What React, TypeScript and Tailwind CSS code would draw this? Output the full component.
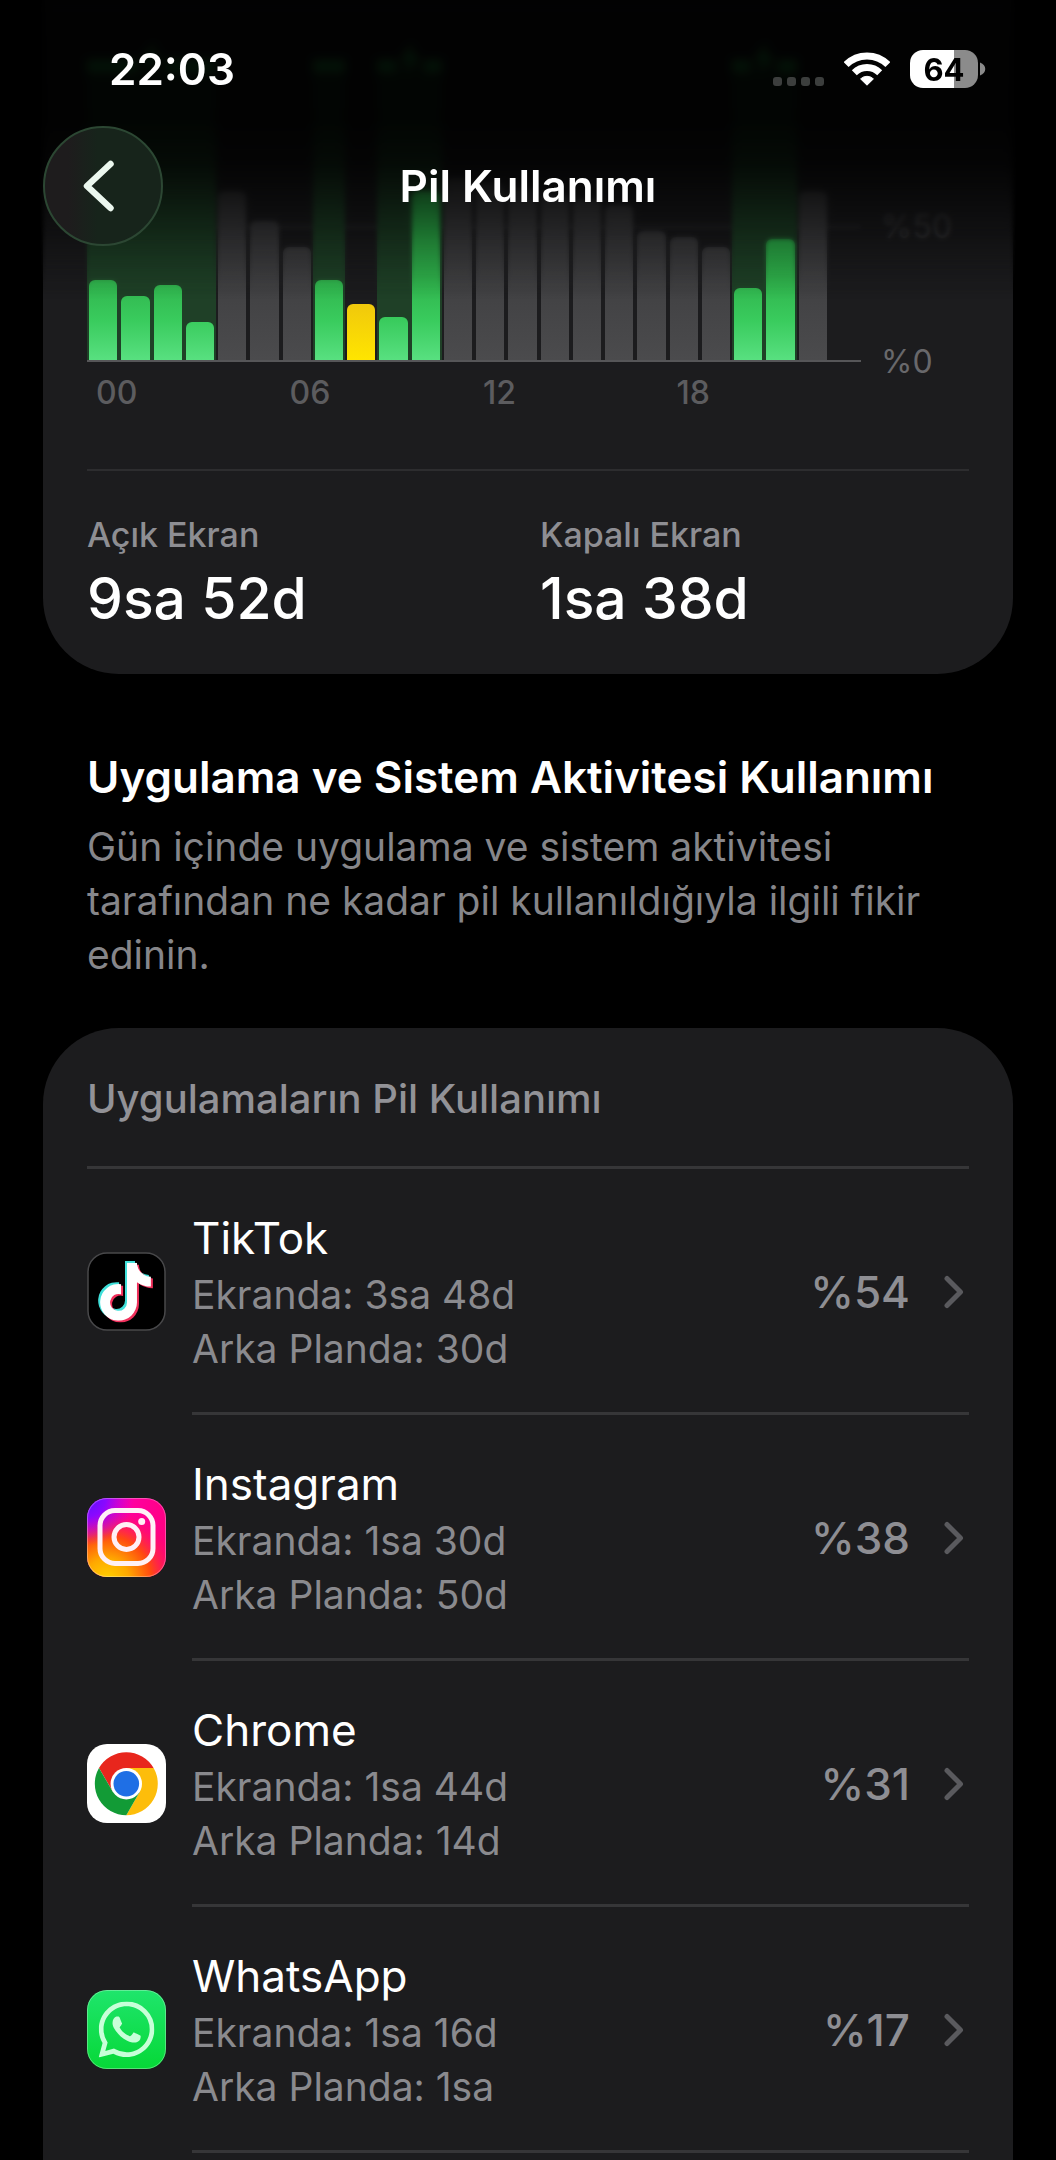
import React from 'react';
import { FaTiktok } from 'react-icons/fa6';
import { SiWhatsapp } from 'react-icons/si';

type BarKind = 'charge' | 'low' | 'idle';

interface HourBar {
  level: number;
  kind: BarKind;
}

interface AppUsage {
  name: string;
  onScreen: string;
  background: string;
  percent: number;
  icon: React.ReactNode;
}

const bars: HourBar[] = [
  { level: 30, kind: 'charge' },
  { level: 24, kind: 'charge' },
  { level: 28, kind: 'charge' },
  { level: 14, kind: 'charge' },
  { level: 63, kind: 'idle' },
  { level: 52, kind: 'idle' },
  { level: 42, kind: 'idle' },
  { level: 30, kind: 'charge' },
  { level: 21, kind: 'low' },
  { level: 16, kind: 'charge' },
  { level: 63, kind: 'charge' },
  { level: 68, kind: 'idle' },
  { level: 66, kind: 'idle' },
  { level: 64, kind: 'idle' },
  { level: 62, kind: 'idle' },
  { level: 60, kind: 'idle' },
  { level: 58, kind: 'idle' },
  { level: 48, kind: 'idle' },
  { level: 46, kind: 'idle' },
  { level: 42, kind: 'idle' },
  { level: 27, kind: 'charge' },
  { level: 45, kind: 'charge' },
  { level: 63, kind: 'idle' },
  { level: 0, kind: 'idle' },
];

// first hour and length of each charging period
const chargePeriods = [
  { start: 0, hours: 4 },
  { start: 7, hours: 1 },
  { start: 9, hours: 2 },
  { start: 20, hours: 2 },
];

const barColors: Record<BarKind, string> = {
  charge: 'bg-[linear-gradient(to_top,#58e080,#39cb5d_40px,#30b24c_82px,#2db34b)]',
  low: 'bg-[linear-gradient(to_top,#ffe500,#f0c80c_57px)]',
  idle: 'bg-[linear-gradient(to_top,#4b4b4d,#404042_82px,#3c3c3e)]',
};

const TikTokIcon = () => (
  <svg viewBox="0 0 79 79" className="size-full">
    <rect x="1" y="1" width="77" height="77" rx="19" fill="#000" stroke="#48484a" strokeWidth="1.5" />
    <FaTiktok x="7.5" y="9" size={58} color="#3fe0da" />
    <FaTiktok x="11.5" y="12.5" size={58} color="#f0305c" />
    <FaTiktok x="9.5" y="10.8" size={58} color="#fff" />
  </svg>
);

const InstagramIcon = () => (
  <svg viewBox="0 0 79 79" className="size-full">
    <defs>
      <linearGradient id="ig-base" x1="0" y1="0.3" x2="1" y2="0.5">
        <stop offset="0" stopColor="#d800d8" />
        <stop offset="0.5" stopColor="#ff00a0" />
        <stop offset="1" stopColor="#ff0080" />
      </linearGradient>
      <radialGradient id="ig-warm" cx="0.25" cy="1.05" r="0.95">
        <stop offset="0" stopColor="#ffd400" />
        <stop offset="0.3" stopColor="#ffa800" />
        <stop offset="0.6" stopColor="#ff4a10" />
        <stop offset="1" stopColor="#ff0070" stopOpacity="0" />
      </radialGradient>
      <radialGradient id="ig-violet" cx="0" cy="0" r="0.6">
        <stop offset="0" stopColor="#5a10ff" />
        <stop offset="0.4" stopColor="#8a08ff" />
        <stop offset="1" stopColor="#d800d8" stopOpacity="0" />
      </radialGradient>
    </defs>
    <rect width="79" height="79" rx="20" fill="url(#ig-base)" />
    <rect width="79" height="79" rx="20" fill="url(#ig-warm)" />
    <rect width="79" height="79" rx="20" fill="url(#ig-violet)" />
    <rect x="0.5" y="0.5" width="78" height="78" rx="19.5" fill="none" stroke="#fff" strokeOpacity="0.3" />
    <g fill="none" stroke="#fff0f6" strokeWidth="5">
      <rect x="13" y="12.5" width="53" height="53" rx="15" />
      <circle cx="39.5" cy="39" r="12.5" />
    </g>
    <circle cx="54.7" cy="23.6" r="3.5" fill="#fff0f6" />
  </svg>
);

const ChromeIcon = () => (
  <svg viewBox="0 0 79 79" className="size-full">
    <rect width="79" height="79" rx="20" fill="#fff" />
    <g transform="translate(39.3 39.7)">
      <path d="M-27.3 -15.7A31.5 31.5 0 0 1 27.3 -15.7L0 -15.7L-13.6 7.85Z" fill="#e8261d" />
      <path d="M27.3 -15.7A31.5 31.5 0 0 1 0 31.5L13.6 7.85L0 -15.7Z" fill="#fdbd0b" />
      <path d="M0 31.5A31.5 31.5 0 0 1 -27.3 -15.7L-13.6 7.85L13.6 7.85Z" fill="#129b36" />
      <circle r="15.7" fill="#fff" />
      <circle r="12.8" fill="#1f6fe5" />
    </g>
  </svg>
);

const WhatsAppIcon = () => (
  <svg viewBox="0 0 79 79" className="size-full">
    <defs>
      <linearGradient id="wa-base" x1="0" y1="0" x2="0" y2="1">
        <stop offset="0" stopColor="#1fe56c" />
        <stop offset="1" stopColor="#06d837" />
      </linearGradient>
    </defs>
    <rect width="79" height="79" rx="20" fill="url(#wa-base)" />
    <rect x="0.5" y="0.5" width="78" height="78" rx="19.5" fill="none" stroke="#fff" strokeOpacity="0.3" />
    <SiWhatsapp x="11.5" y="11.5" size={56} color="#c8ffd9" />
  </svg>
);

const apps: AppUsage[] = [
  { name: 'TikTok', onScreen: '3sa 48d', background: '30d', percent: 54, icon: <TikTokIcon /> },
  { name: 'Instagram', onScreen: '1sa 30d', background: '50d', percent: 38, icon: <InstagramIcon /> },
  { name: 'Chrome', onScreen: '1sa 44d', background: '14d', percent: 31, icon: <ChromeIcon /> },
  { name: 'WhatsApp', onScreen: '1sa 16d', background: '1sa', percent: 17, icon: <WhatsAppIcon /> },
];

const StatusBar = () => (
  <div className="flex h-[62px] items-center justify-between pr-[70px] pl-[109px]">
    <span className="text-[44px] leading-none font-semibold">22:03</span>
    <div className="flex items-center">
      <div className="mt-6 mr-5 flex gap-[5px]">
        {[0, 1, 2, 3].map((dot) => (
          <span key={dot} className="size-[9px] rounded-[3px] bg-[#3c3e3d]" />
        ))}
      </div>
      <svg viewBox="0 0 46 34" className="mr-5 h-[34px] w-[46px]" fill="none" stroke="#fff" strokeWidth="7">
        <path d="M2.1 12.6A29.5 29.5 0 0 1 43.9 12.6" />
        <path d="M10.3 20.8A18 18 0 0 1 35.7 20.8" />
        <path d="M23 33.2L16.6 26.9A9.2 9.2 0 0 1 29.4 26.9Z" fill="#fff" stroke="#fff" strokeWidth="1" strokeLinejoin="round" />
      </svg>
      <div className="flex h-[38px] w-[68px] items-center justify-center rounded-[13px] bg-[linear-gradient(to_right,#fff_64%,#8b8b8b_64%)]">
        <span className="text-[31px] leading-none font-bold text-black">64</span>
      </div>
      <svg viewBox="0 0 6 14" className="ml-[2px] h-[14px] w-[6px]" fill="#8b8b8b">
        <path d="M0 0.5C7 3 7 11 0 13.5Z" />
      </svg>
    </div>
  </div>
);

const Header = () => (
  <header className="absolute inset-x-0 top-0 z-10 h-[300px] pt-[38px]">
    <div className="absolute inset-0 -z-10 backdrop-blur-[2px] [mask-image:linear-gradient(to_bottom,#000_75%,transparent_98%)]" />
    <div className="absolute inset-0 -z-10 backdrop-blur-[4px] [mask-image:linear-gradient(to_bottom,#000_45%,transparent_80%)]" />
    <div className="absolute inset-0 -z-10 bg-[linear-gradient(to_bottom,rgba(0,0,0,0.9),rgba(0,0,0,0.92)_120px,rgba(0,0,0,0.82)_165px,rgba(0,0,0,0.6)_200px,rgba(0,0,0,0.32)_240px,rgba(0,0,0,0.08)_280px,transparent)]" />
    <StatusBar />
    <nav className="mt-[26px] grid grid-cols-[1fr_auto_1fr] items-center px-[43px]">
      <button
        type="button"
        aria-label="Geri"
        className="flex size-[120px] items-center justify-center rounded-full border-2 border-[#2c4733] bg-[linear-gradient(to_right,#1e1c1d_20%,#17241b_45%)]"
      >
        <svg viewBox="0 0 32 52" className="mr-2 h-[52px] w-[32px]" fill="none" stroke="#ebf7ee" strokeWidth="6.5" strokeLinecap="round" strokeLinejoin="round">
          <path d="M27.5 4L4 26L27.5 48" />
        </svg>
      </button>
      <h1 className="text-[44px] leading-[48px] font-semibold">Pil Kullanımı</h1>
    </nav>
  </header>
);

const BatteryChart = () => (
  <div className="flex">
    <div className="min-w-0 flex-1">
      <div className="relative h-[270px] border-b-2 border-[#565658]">
        <div className="absolute inset-x-0 top-1/2 h-[2px] bg-[#2e2e30]" />
        <div className="absolute inset-x-0 -top-8 bottom-0 grid grid-cols-24">
          {chargePeriods.map((period) => (
            <div
              key={period.start}
              className="bg-[#1f4027]"
              style={{ gridColumn: `${period.start + 1} / span ${period.hours}` }}
            >
              <div className="flex h-[12px] items-center justify-center gap-1">
                <span className="h-[12px] flex-1 bg-[#30d158]" />
                {period.hours > 1 && (
                  <svg viewBox="0 0 20 32" className="mb-4 h-[32px] w-[20px]" fill="#30d158">
                    <path d="M13 0L0 18H8L6 32L20 13H11Z" />
                  </svg>
                )}
                {period.hours > 1 && <span className="h-[12px] flex-1 bg-[#30d158]" />}
              </div>
            </div>
          ))}
        </div>
        <div className="relative flex h-full items-end">
          {bars.map((bar, hour) => (
            <div key={hour} className="flex h-full flex-1 items-end px-[2px]">
              <div className={`w-full rounded-t-[6px] ${barColors[bar.kind]}`} style={{ height: `${bar.level}%` }} />
            </div>
          ))}
        </div>
      </div>
      <div className="mt-[11px] grid grid-cols-4 text-[32px] leading-[40px] font-medium text-[#5c5c5f]">
        {['00', '06', '12', '18'].map((hour) => (
          <span key={hour} className="pl-[9px]">{hour}</span>
        ))}
      </div>
    </div>
    <div className="flex w-[108px] flex-col pt-[115px] pl-5 text-[32px] leading-[40px]">
      <span className="text-[#38383a]">%50</span>
      <span className="mt-[95px] text-[#68686b]">%0</span>
    </div>
  </div>
);

const Stat = ({ label, value }: { label: string; value: string }) => (
  <div>
    <dt className="text-[34px] leading-[42px] font-medium text-[#8e8e93]">{label}</dt>
    <dd className="mt-2 text-[57px] leading-[70px] font-medium">{value}</dd>
  </div>
);

const AppRow = ({ app }: { app: AppUsage }) => (
  <li className="flex gap-[26px]">
    <div className="mt-[83px] size-[79px] shrink-0">{app.icon}</div>
    <a href="#" className="flex flex-1 items-center border-b-3 border-[#363638] pt-[39px] pb-[36px]">
      <div className="flex-1">
        <h3 className="text-[44px] leading-[60px]">{app.name}</h3>
        <p className="text-[39px] leading-[54px] text-[#8a8a8e]">Ekranda: {app.onScreen}</p>
        <p className="text-[39px] leading-[54px] text-[#8a8a8e]">Arka Planda: {app.background}</p>
      </div>
      <span className="text-[44px] leading-[60px] font-medium text-[#8e8e93]">%{app.percent}</span>
      <svg viewBox="0 0 20 34" className="mr-[5px] ml-[34px] h-[34px] w-[20px]" fill="none" stroke="#5a5a5e" strokeWidth="5" strokeLinecap="round" strokeLinejoin="round">
        <path d="M3 3.5L16.5 17L3 30.5" />
      </svg>
    </a>
  </li>
);

export default function App() {
  return (
    <div className="relative min-h-screen overflow-hidden bg-black font-['Inter',sans-serif] text-white">
      <Header />
      <main className="px-[43px]">
        <section className="rounded-b-[76px] bg-[#1c1c1e] px-[44px] pt-[92px] pb-[40px]">
          <BatteryChart />
          <dl className="mt-[56px] grid grid-cols-2 gap-6 border-t-2 border-[#2d2d2f] pt-[43px]">
            <Stat label="Açık Ekran" value="9sa 52d" />
            <Stat label="Kapalı Ekran" value="1sa 38d" />
          </dl>
        </section>

        <section className="px-[44px] pt-[75px] pb-[46px]">
          <h2 className="text-[44px] leading-[56px] font-semibold">Uygulama ve Sistem Aktivitesi Kullanımı</h2>
          <p className="mt-[15px] text-[39px] leading-[54px] text-[#86868a]">
            Gün içinde uygulama ve sistem aktivitesi tarafından ne kadar pil kullanıldığıyla ilgili fikir edinin.
          </p>
        </section>

        <section className="rounded-t-[76px] bg-[#1c1c1e] px-[44px]">
          <h2 className="border-b-3 border-[#363638] pt-[43px] pb-[40px] text-[40px] leading-[55px] font-medium text-[#929297]">
            Uygulamaların Pil Kullanımı
          </h2>
          <ul className="pb-2">
            {apps.map((app) => (
              <AppRow key={app.name} app={app} />
            ))}
          </ul>
        </section>
      </main>
    </div>
  );
}
